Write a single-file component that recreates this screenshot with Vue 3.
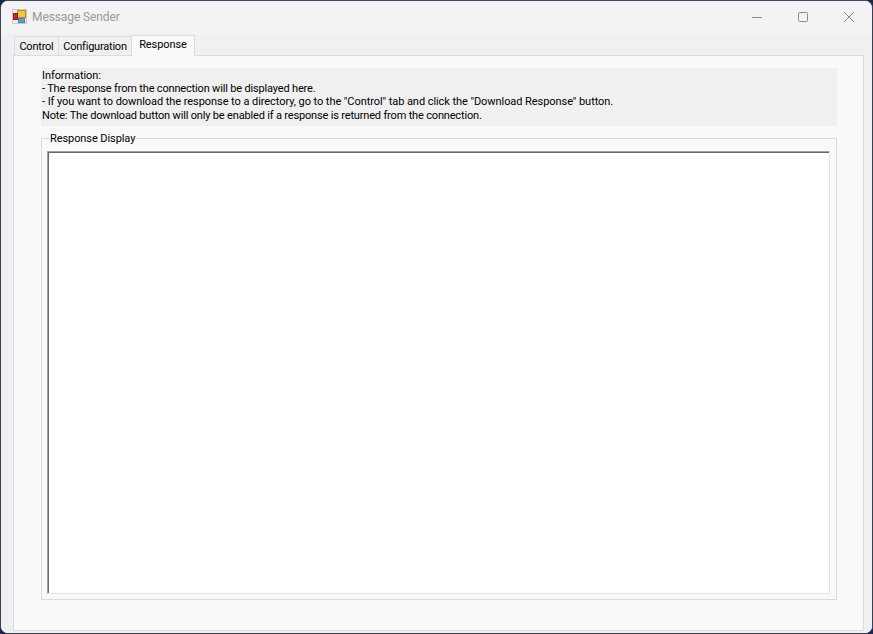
<script setup>
const tabs = [
  { label: 'Control', active: false },
  { label: 'Configuration', active: false },
  { label: 'Response', active: true },
]
const info = [
  'Information:',
  '- The response from the connection will be displayed here.',
  '- If you want to download the response to a directory, go to the "Control" tab and click the "Download Response" button.',
  'Note: The download button will only be enabled if a response is returned from the connection.',
]
</script>

<template>
  <div class="desktop">
    <div class="window">
      <header class="titlebar">
        <svg class="app-icon" width="16" height="16" viewBox="0 0 16 16">
          <rect x="0.5" y="0.5" width="14" height="14" fill="#efefef" stroke="#c8c8c8" />
          <rect x="5.5" y="1.5" width="8" height="7" fill="#f6c62e" stroke="#b09030" />
          <rect x="1.5" y="4.5" width="4" height="6" fill="#d82020" stroke="#8a2020" />
          <rect x="6.5" y="9.5" width="6" height="4" fill="#5a9ae6" stroke="#4a7ac0" />
        </svg>
        <span class="title">Message Sender</span>
        <div class="controls">
          <svg class="ctl" width="46" height="34" viewBox="0 0 46 34">
            <path d="M18 16.5H28" stroke="#8a8a8a" fill="none" />
          </svg>
          <svg class="ctl" width="46" height="34" viewBox="0 0 46 34">
            <rect x="18.5" y="11.5" width="9" height="9" rx="1" stroke="#8a8a8a" fill="none" />
          </svg>
          <svg class="ctl" width="46" height="34" viewBox="0 0 46 34">
            <path d="M18 11L28 21M28 11L18 21" stroke="#8a8a8a" fill="none" />
          </svg>
        </div>
      </header>
      <div class="content">
        <nav class="tabs">
          <div v-for="t in tabs" :key="t.label" class="tab" :class="{ active: t.active }">{{ t.label }}</div>
        </nav>
        <main class="panel">
          <section class="info">
            <div v-for="line in info" :key="line" class="line">{{ line }}</div>
          </section>
          <fieldset class="group">
            <legend class="legend">Response Display</legend>
            <div class="textbox"></div>
          </fieldset>
        </main>
      </div>
    </div>
  </div>
</template>

<style>
html, body { margin: 0; padding: 0; background: #1b2350; }
</style>

<style scoped>
.desktop {
  width: 873px;
  height: 634px;
  background: #1b2350;
  overflow: hidden;
}
.window {
  width: 873px;
  height: 634px;
  box-sizing: border-box;
  border: 1px solid #3a3f5e;
  border-top-color: #41456a;
  border-radius: 8px;
  background: #f0f0f0;
  display: flex;
  flex-direction: column;
  font-family: "Roboto", "Liberation Sans", sans-serif;
  font-size: 11px;
  letter-spacing: -0.08px;
  color: #000;
  overflow: hidden;
}
.titlebar {
  height: 33px;
  flex: none;
  background: #f3f3f3;
  display: flex;
  align-items: center;
  padding-left: 11px;
}
.app-icon { flex: none; margin-top: -2px; }
.title {
  margin-left: 4px;
  margin-top: -2px;
  color: #9a9a9a;
  font-size: 12px;
  letter-spacing: -0.1px;
}
.controls { margin-left: auto; display: flex; }
.ctl { display: block; }
.content {
  flex: 1;
  background: #f0f0f0;
  padding: 0 8px 2px 12px;
  display: flex;
  flex-direction: column;
}
.tabs {
  display: flex;
  height: 21px;
  flex: none;
  padding-left: 1px;
  align-items: flex-end;
  position: relative;
}
.tab {
  height: 19px;
  box-sizing: border-box;
  border: 1px solid #dcdcdc;
  border-bottom: none;
  line-height: 20px;
  background: #f0f0f0;
  margin-right: -1px;
  text-align: center;
  width: 45px;
  letter-spacing: -0.22px;
}
.tab:nth-child(2) { width: 74px; }
.tab.active {
  width: 64px;
  height: 21px;
  background: #f9f9f9;
  line-height: 17px;
  margin-bottom: -1px;
  position: relative;
  z-index: 1;
  letter-spacing: -0.08px;
}
.panel {
  flex: 1;
  box-sizing: border-box;
  border: 1px solid #dcdcdc;
  background: #f9f9f9;
  padding: 12px 26px 30px 27px;
  display: flex;
  flex-direction: column;
}
.info {
  height: 58px;
  flex: none;
  box-sizing: border-box;
  background: #f0f0f0;
  padding: 1px 0 0 1px;
}
.line { line-height: 13.2px; white-space: nowrap; }
.line:nth-child(2) { letter-spacing: -0.17px; }
.line:nth-child(3) { letter-spacing: -0.06px; }
.line:nth-child(4) { letter-spacing: -0.17px; }
.group {
  flex: 1;
  margin: 5px 0 0;
  padding: 5px 6px 5px 5px;
  border: 1px solid #dcdcdc;
  min-width: 0;
  display: flex;
  flex-direction: column;
}
.legend { padding: 0 1px; margin-left: 2px; line-height: 15px; }
.textbox {
  height: 443px;
  flex: none;
  box-sizing: border-box;
  background: #fff;
  border-top: 1px solid #a0a0a0;
  border-left: 1px solid #a0a0a0;
  border-right: 1px solid #e3e3e3;
  border-bottom: 1px solid #e3e3e3;
  box-shadow: inset 1px 1px 0 #696969;
}
</style>
